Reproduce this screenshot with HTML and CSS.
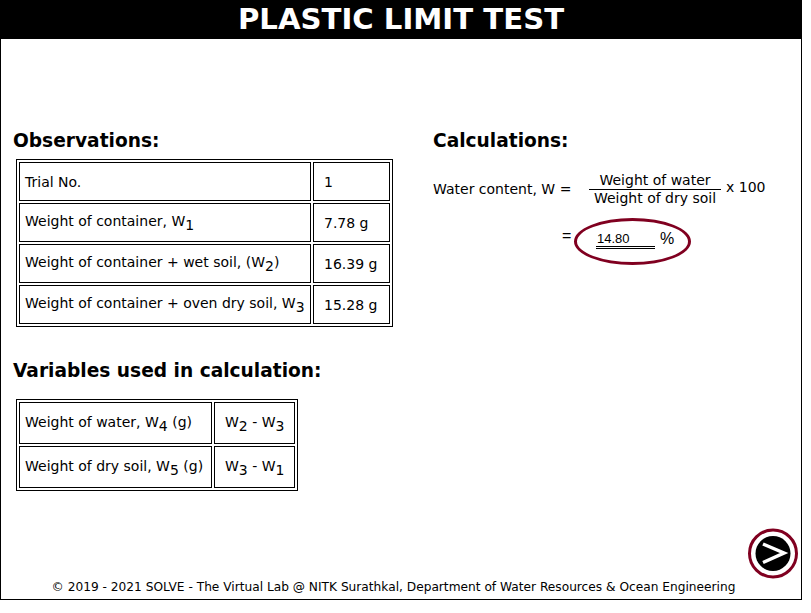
FILE: index.html
```html
<!DOCTYPE html>
<html lang="en">
<head>
    <meta charset="UTF-8">
    <meta name="viewport" content="width=device-width, initial-scale=1.0">
    <title>Plastic Limit Test</title>
    <link rel="stylesheet" href="styles.css">
</head>
<body>

<div class="frame">
    <h1 class="title">PLASTIC LIMIT TEST</h1>

    <div class="content">
        <div class="left-col">
            <h2>Observations:</h2>
            <table class="data-table obs-table">
                <tr>
                    <td class="label-cell">Trial No.</td>
                    <td class="value-cell">1</td>
                </tr>
                <tr>
                    <td class="label-cell">Weight of container, W<sub>1</sub></td>
                    <td class="value-cell">7.78 g</td>
                </tr>
                <tr>
                    <td class="label-cell">Weight of container + wet soil, (W<sub>2</sub>)</td>
                    <td class="value-cell">16.39 g</td>
                </tr>
                <tr>
                    <td class="label-cell">Weight of container + oven dry soil, W<sub>3</sub></td>
                    <td class="value-cell">15.28 g</td>
                </tr>
            </table>

            <h2 class="vars-heading">Variables used in calculation:</h2>
            <table class="data-table vars-table">
                <tr>
                    <td class="label-cell">Weight of water, W<sub>4</sub> (g)</td>
                    <td class="formula-cell">W<sub>2</sub> - W<sub>3</sub></td>
                </tr>
                <tr>
                    <td class="label-cell">Weight of dry soil, W<sub>5</sub> (g)</td>
                    <td class="formula-cell">W<sub>3</sub> - W<sub>1</sub></td>
                </tr>
            </table>
        </div>

        <div class="right-col">
            <h2>Calculations:</h2>
            <div class="formula">
                <span class="formula-name">Water content, W =</span>
                <span class="fraction">
                    <span class="numerator">Weight of water</span>
                    <span class="denominator">Weight of dry soil</span>
                </span>
                <span class="times">x 100</span>
            </div>
            <div class="result">
                <span class="equals">=</span>
                <span class="answer">14.80</span>
                <span class="percent">%</span>
                <span class="result-ring"></span>
            </div>
        </div>
    </div>

    <div class="footer">&copy; 2019 - 2021 SOLVE - The Virtual Lab @ NITK Surathkal, Department of Water Resources &amp; Ocean Engineering</div>

    <!-- next button -->
    <svg class="next-btn" width="52" height="54" viewBox="0 0 52 54">
        <circle cx="26" cy="26.5" r="23.5" fill="#fff" stroke="#800020" stroke-width="3"/>
        <circle cx="26" cy="26.5" r="17.5" fill="#000"/>
        <path d="M16 17 L37 26 L16 35.5" fill="none" stroke="#fff" stroke-width="3.5"/>
    </svg>
</div>

</body>
</html>
```

FILE: styles.css
```css
body {
    margin: 0;
    font-family: "DejaVu Sans", Verdana, sans-serif;
    color: #000;
    background-color: #fff;
}
.frame {
    position: relative;
    box-sizing: border-box;
    width: 802px;
    height: 600px;
    border: 1px solid #000;
    border-top: none;
    display: flex;
    flex-direction: column;
}
.title {
    margin: 0 -1px;
    height: 39px;
    line-height: 39px;
    background-color: #000;
    color: #fff;
    font-size: 29.2px;
    font-weight: bold;
    text-align: center;
}
.content {
    flex: 1;
    display: flex;
    padding: 90px 0 0 12px;
}
.left-col {
    width: 420px;
}
.right-col {
    flex: 1;
}
h2 {
    margin: 0;
    height: 22px;
    line-height: 24px;
    font-size: 18.6px;
    font-weight: bold;
}
.data-table {
    border-collapse: separate;
    border-spacing: 2px;
    border: 1px solid #000;
    margin: 8px 0 0 3px;
    font-size: 14px;
}
.data-table td {
    border: 1px solid #000;
    padding: 0 0 0 5px;
}
.data-table sub {
    font-size: 14px;
}
.obs-table td {
    height: 37px;
}
.obs-table .label-cell {
    width: 285px;
}
.obs-table .value-cell {
    width: 65px;
    padding-left: 10px;
}
.vars-heading {
    margin-top: 32px;
}
.vars-table {
    margin-top: 18px;
}
.vars-table td {
    height: 38px;
    padding-top: 2px;
}
.vars-table .label-cell {
    width: 186px;
}
.vars-table .formula-cell {
    width: 69px;
    padding-left: 10px;
}
.formula {
    display: flex;
    align-items: center;
    margin-top: 19px;
    font-size: 14px;
}
.formula-name {
    width: 156px;
}
.fraction {
    display: flex;
    flex-direction: column;
    align-items: center;
    width: 132px;
    margin-top: 2px;
}
.numerator {
    width: 100%;
    text-align: center;
    line-height: 17px;
    border-bottom: 1px solid #000;
}
.denominator {
    line-height: 17px;
}
.times {
    margin-left: 5px;
    margin-top: -3px;
}
.result {
    position: relative;
    display: flex;
    align-items: center;
    margin: 18px 0 0 129px;
    height: 28px;
    font-family: "Liberation Sans", Arial, sans-serif;
    font-size: 16px;
}
.equals {
    width: 34px;
    margin-top: -6px;
}
.answer {
    box-sizing: border-box;
    width: 59px;
    margin-top: 2px;
    padding-left: 1px;
    font-size: 13px;
    line-height: 15px;
    border-bottom: 3px double #000;
}
.percent {
    margin-left: 5px;
}
.result-ring {
    position: absolute;
    left: 12px;
    top: -7px;
    box-sizing: border-box;
    width: 117px;
    height: 47px;
    border: 3px solid #800020;
    border-radius: 50%;
}
.footer {
    padding: 0 15px 5px 0;
    font-size: 12.2px;
    line-height: 14px;
    text-align: center;
}
.next-btn {
    position: absolute;
    left: 746px;
    top: 527px;
}
```
